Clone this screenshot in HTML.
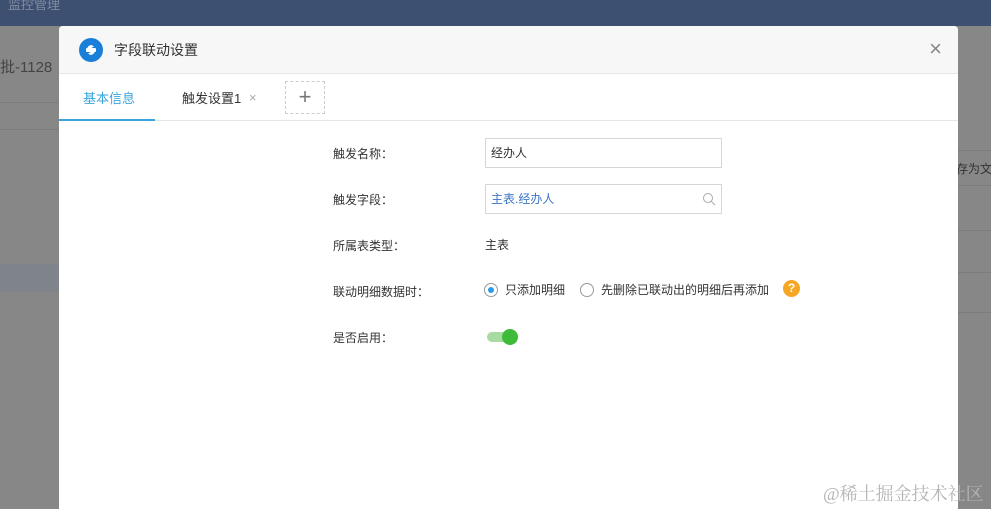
<!DOCTYPE html>
<html><head><meta charset="utf-8"><style>
*{margin:0;padding:0;box-sizing:border-box}
body{width:991px;height:509px;overflow:hidden;position:relative;background:#878787;font-family:"Liberation Sans","Noto Sans CJK SC",sans-serif;font-size:12px;color:#333}
.top{position:absolute;left:0;top:0;width:991px;height:26px;background:#3e5071;color:#7f8ba0;font-size:13px;padding-left:8px;line-height:10px}
.ln{position:absolute;height:1px;background:#7c7c7c}
.modal{position:absolute;left:59px;top:26px;width:899px;height:483px;background:#fff;border-radius:4px 4px 0 0}
.hd{height:48px;background:#f7f7f7;border-bottom:1px solid #e6e6e6;border-radius:4px 4px 0 0;position:relative}
.hd .t{position:absolute;left:55px;top:14px;font-size:14px;color:#333}
.tabs{height:47px;border-bottom:1px solid #e6e6e6;position:relative}
.lab{position:absolute;left:274px;color:#333;font-size:12px}
.inp{position:absolute;left:426px;width:237px;height:30px;border:1px solid #d6d6d6;padding-left:5px;line-height:28px;font-size:12px}
</style></head><body>
<div class="top">监控管理</div>
<div style="position:absolute;left:0;top:56px;font-size:15px;color:#444">批-1128</div>
<div class="ln" style="left:0;top:102px;width:59px"></div>
<div class="ln" style="left:0;top:129px;width:59px"></div>
<div style="position:absolute;left:0;top:264px;width:59px;height:28px;background:#7f848b"></div>
<div class="ln" style="left:958px;top:150px;width:33px"></div>
<div class="ln" style="left:958px;top:185px;width:33px"></div>
<div class="ln" style="left:958px;top:230px;width:33px"></div>
<div class="ln" style="left:958px;top:272px;width:33px"></div>
<div class="ln" style="left:958px;top:312px;width:33px"></div>
<div style="position:absolute;left:956px;top:160px;font-size:12px;color:#333;white-space:nowrap">存为文件</div>
<div class="modal">
 <div class="hd">
  <svg style="position:absolute;left:20px;top:12px" width="24" height="24" viewBox="0 0 24 24"><circle cx="12" cy="12" r="12" fill="#1a7fd8"/><path d="M8 12c0-3 2-5 5-5l2 2c-2 0-3 1-3 3zM16 12c0 3-2 5-5 5l-2-2c2 0 3-1 3-3z" fill="#fff"/><rect x="7" y="10" width="10" height="4" rx="1" fill="#fff"/></svg>
  <div class="t">字段联动设置</div>
  <div style="position:absolute;right:16px;top:10px;font-size:22px;color:#888;font-weight:300">×</div>
 </div>
 <div class="tabs">
  <div style="position:absolute;left:24px;top:14px;font-size:13px;color:#3aa5dc">基本信息</div>
  <div style="position:absolute;left:0;bottom:-1px;width:96px;height:2px;background:#3aa5dc"></div>
  <div style="position:absolute;left:123px;top:14px;font-size:13px;color:#333">触发设置1</div>
  <div style="position:absolute;left:190px;top:16px;font-size:13px;color:#aaa">×</div>
  <div style="position:absolute;left:226px;top:7px;width:40px;height:33px;border:1px dashed #ccc;text-align:center;line-height:30px;font-size:22px;color:#777">+</div>
 </div>
 <div class="lab" style="top:119px">触发名称：</div>
 <div class="inp" style="top:112px">经办人</div>
 <div class="lab" style="top:165px">触发字段：</div>
 <div class="inp" style="top:158px;color:#3b74c4">主表.经办人
  <svg style="position:absolute;right:5px;top:7px" width="14" height="14" viewBox="0 0 14 14"><circle cx="6" cy="6" r="4.5" fill="none" stroke="#aaa" stroke-width="1"/><path d="M9.3 9.3L13 13" stroke="#aaa" stroke-width="1"/></svg></div>
 <div class="lab" style="top:211px">所属表类型：</div>
 <div style="position:absolute;left:426px;top:210px">主表</div>
 <div class="lab" style="top:257px">联动明细数据时：</div>
 <div style="position:absolute;left:425px;top:257px;width:14px;height:14px;border:1px solid #999;border-radius:50%"><div style="position:absolute;left:3px;top:3px;width:6px;height:6px;border-radius:50%;background:#2a9be5"></div></div>
 <div style="position:absolute;left:446px;top:255px">只添加明细</div>
 <div style="position:absolute;left:521px;top:257px;width:14px;height:14px;border:1px solid #999;border-radius:50%"></div>
 <div style="position:absolute;left:542px;top:255px">先删除已联动出的明细后再添加</div>
 <div style="position:absolute;left:724px;top:254px;width:17px;height:17px;border-radius:50%;background:#f5a623;color:#fff;font-weight:bold;text-align:center;line-height:17px;font-size:12px">?</div>
 <div class="lab" style="top:303px">是否启用：</div>
 <div style="position:absolute;left:428px;top:306px;width:26px;height:10px;border-radius:5px;background:#a6dca0"></div>
 <div style="position:absolute;left:443px;top:303px;width:16px;height:16px;border-radius:50%;background:#3fbb3a"></div>
</div>
<div style="position:absolute;left:823px;top:480px;font-size:18px;color:#b5b5b5;font-family:'Liberation Serif','Noto Serif CJK SC',serif;white-space:nowrap">@稀土掘金技术社区</div>
</body></html>
